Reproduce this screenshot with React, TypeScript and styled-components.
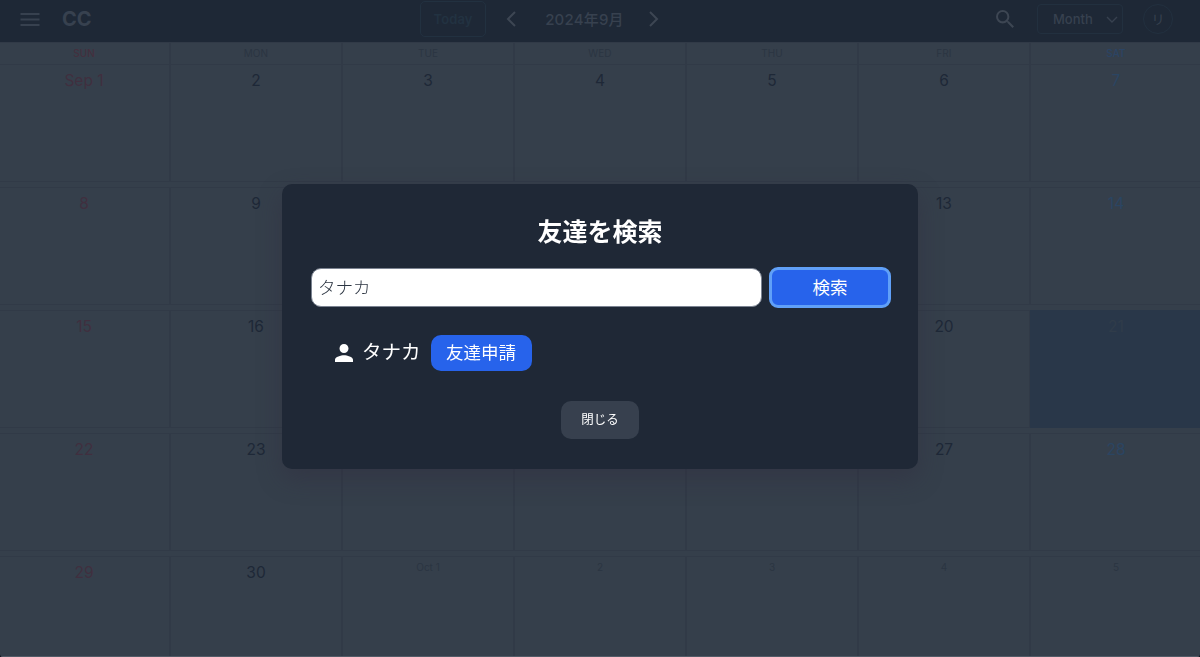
import styled, { createGlobalStyle, css } from "styled-components";

const weekdays = ["SUN", "MON", "TUE", "WED", "THU", "FRI", "SAT"];

const weeks = [
  ["Sep 1", "2", "3", "4", "5", "6", "7"],
  ["8", "9", "10", "11", "12", "13", "14"],
  ["15", "16", "17", "18", "19", "20", "21"],
  ["22", "23", "24", "25", "26", "27", "28"],
  ["29", "30", "Oct 1", "2", "3", "4", "5"]
];

const TODAY = "21";

const dayColor = (index: number) => {
  if (index === 0) return "#402f3f";
  if (index === 6) return "#2b4562";
  return "#1e2837";
};

const Header = () => (
  <HeaderBar>
    <HeaderLeft>
      <MenuIcon viewBox="0 0 20 14">
        <path d="M.5 2h19M.5 7.500h19M.5 13h19" />
      </MenuIcon>
      <Logo>CC</Logo>
    </HeaderLeft>
    <HeaderCenter>
      <TodayButton>Today</TodayButton>
      <Chevron viewBox="0 0 10 16">
        <path d="M9 1L2 8l7 7" />
      </Chevron>
      <MonthTitle>2024年9月</MonthTitle>
      <Chevron viewBox="0 0 10 16">
        <path d="M1 1l7 7-7 7" />
      </Chevron>
    </HeaderCenter>
    <HeaderRight>
      <SearchIcon viewBox="3 3 17.49 17.49">
        <path d="M15.5 14h-.79l-.28-.27A6.471 6.471 0 0 0 16 9.5 6.5 6.5 0 1 0 9.5 16c1.61 0 3.09-.59 4.23-1.57l.27.28v.79l5 4.99L20.49 19l-4.99-5zm-6 0C7.01 14 5 11.99 5 9.5S7.01 5 9.5 5 14 7.01 14 9.5 11.99 14 9.5 14z" />
      </SearchIcon>
      <ViewSelect>
        Month
        <SelectArrow viewBox="0 0 12 7">
          <path d="M1 1l5 5 5-5" />
        </SelectArrow>
      </ViewSelect>
      <Avatar>リ</Avatar>
    </HeaderRight>
  </HeaderBar>
);

const Calendar = () => (
  <CalendarWrapper>
    <WeekdayRow>
      {weekdays.map((day, i) => (
        <Weekday key={day} $index={i}>
          {day}
        </Weekday>
      ))}
    </WeekdayRow>
    <Weeks>
      {weeks.map((week, row) => (
        <Week key={week[0]}>
          {week.map((day, i) => (
            <DayCell
              key={day}
              $index={i}
              $today={day === TODAY}
              $outside={row === 4 && i > 1}
            >
              {day}
            </DayCell>
          ))}
        </Week>
      ))}
    </Weeks>
  </CalendarWrapper>
);

const FriendSearchModal = () => (
  <Overlay>
    <Modal>
      <ModalTitle>友達を検索</ModalTitle>
      <SearchRow>
        <SearchInput defaultValue="タナカ" />
        <SearchButton>検索</SearchButton>
      </SearchRow>
      <ResultRow>
        <PersonIcon viewBox="4 4 16 16">
          <path d="M12 12c2.210 0 4-1.790 4-4s-1.790-4-4-4-4 1.790-4 4 1.790 4 4 4zm0 2c-2.670 0-8 1.340-8 4v2h16v-2c0-2.660-5.330-4-8-4z" />
        </PersonIcon>
        <FriendName>タナカ</FriendName>
        <RequestButton>友達申請</RequestButton>
      </ResultRow>
      <CloseButton>閉じる</CloseButton>
    </Modal>
  </Overlay>
);

const App = () => (
  <>
    <GlobalStyle />
    <Page>
      <Header />
      <Calendar />
      <BottomEdge />
    </Page>
    <FriendSearchModal />
  </>
);

const GlobalStyle = createGlobalStyle`
  * {
    box-sizing: border-box;
  }
  body {
    margin: 0;
    overflow: hidden;
    background: #0b1019;
    font-family: Inter, "Noto Sans CJK JP", sans-serif;
  }
  button, input {
    font-family: inherit;
  }
`;

const Page = styled.div`
  display: flex;
  flex-direction: column;
  height: 657px;
  overflow: hidden;
  border-radius: 0 0 3px 3px;
  background: #353f4b;
`;

const HeaderBar = styled.header`
  display: grid;
  grid-template-columns: 420px 1fr 320px;
  flex: none;
  height: 42px;
  background: #1e2836;
  color: #37414f;
`;

const HeaderLeft = styled.div`
  display: flex;
  align-items: center;
  height: 38px;
  padding-left: 20px;
`;

const HeaderCenter = styled.div`
  display: flex;
  align-items: center;
  height: 38px;
`;

const HeaderRight = styled.div`
  display: flex;
  align-items: center;
  justify-content: flex-end;
  height: 38px;
  padding-right: 27px;
`;

const MenuIcon = styled.svg`
  width: 20px;
  height: 14px;
  margin-right: 22px;
  fill: none;
  stroke: #37414f;
  stroke-width: 2;
`;

const Logo = styled.div`
  font-size: 20px;
  font-weight: 700;
`;

const TodayButton = styled.button`
  width: 66px;
  height: 36px;
  padding: 0;
  border: 1px solid #223140;
  border-radius: 5px;
  background: transparent;
  color: #223241;
  font-size: 13px;
  font-weight: 600;
  letter-spacing: 0.1px;
  margin-right: 20px;
`;

const Chevron = styled.svg`
  width: 10px;
  height: 16px;
  fill: none;
  stroke: #3d4653;
  stroke-width: 2;
`;

const MonthTitle = styled.div`
  width: 133px;
  padding: 0 0 2px 4px;
  text-align: center;
  font-size: 15px;
  font-weight: 500;
  letter-spacing: 0.2px;
  white-space: nowrap;
`;

const SearchIcon = styled.svg`
  width: 18px;
  height: 18px;
  margin-right: 23px;
  fill: #3d4653;
`;

const ViewSelect = styled.div`
  display: flex;
  align-items: center;
  justify-content: space-between;
  width: 86px;
  height: 30px;
  padding: 0 4px 0 15px;
  border: 1px solid #22303f;
  border-radius: 4px;
  font-size: 13px;
  font-weight: 500;
`;

const SelectArrow = styled.svg`
  width: 12px;
  height: 7px;
  fill: none;
  stroke: #37414f;
  stroke-width: 1.4;
`;

const Avatar = styled.div`
  display: flex;
  align-items: center;
  justify-content: center;
  width: 30px;
  height: 30px;
  margin-left: 20px;
  padding-bottom: 2px;
  border: 1px solid #22303f;
  border-radius: 50%;
  font-size: 13px;
`;

const CalendarWrapper = styled.main`
  flex: 1;
  min-height: 0;
  overflow: hidden;
`;

// the outer columns run past the page edges by one gutter
const weekGrid = css`
  display: grid;
  grid-template-columns: repeat(7, 172px);
  margin: 0 -2px;
`;

const WeekdayRow = styled.div`
  ${weekGrid}
  height: 22px;
`;

const Weekday = styled.div<{ $index: number }>`
  border: solid #313a47;
  border-width: 1px 1px 0;
  color: ${({ $index }) =>
    $index === 0 ? "#442f3e" : $index === 6 ? "#2b4464" : "#2b3542"};
  font-size: 10px;
  font-weight: ${({ $index }) => ($index % 6 === 0 ? 500 : 400)};
  line-height: 21px;
  letter-spacing: 0.1px;
  text-align: center;
`;

const Weeks = styled.div`
  display: flex;
  flex-direction: column;
  gap: 5px;
`;

const Week = styled.div`
  ${weekGrid}
  height: 118px;
`;

const DayCell = styled.div<{
  $index: number;
  $today: boolean;
  $outside: boolean;
}>`
  padding-top: 6px;
  border: 1px solid #313a47;
  color: ${({ $index }) => dayColor($index)};
  font-size: 15.500px;
  line-height: 20px;
  text-align: center;
  ${({ $today }) =>
    $today &&
    css`
      border-color: #293749;
      background: #293749;
      color: #303c4a;
    `}
  ${({ $outside }) =>
    $outside &&
    css`
      padding-top: 0;
      color: #2b3542;
      font-size: 10px;
    `}
`;

const BottomEdge = styled.div`
  flex: none;
  height: 1px;
  background: #525b67;
`;

const Overlay = styled.div`
  position: fixed;
  inset: 0;
  display: flex;
  align-items: flex-start;
  justify-content: center;
  padding-top: 184px;
`;

const Modal = styled.div`
  display: flex;
  flex-direction: column;
  align-items: center;
  width: 636px;
  height: 285px;
  padding: 30px 27px 0 29px;
  border-radius: 10px;
  background: #1f2836;
  box-shadow: 0 10px 24px rgba(48, 44, 62, 0.45);
  color: #fff;
`;

const ModalTitle = styled.h2`
  margin: 0 2px 0 0;
  font-size: 25px;
  font-weight: 700;
  line-height: 36px;
`;

const SearchRow = styled.div`
  display: flex;
  align-items: center;
  width: 100%;
  margin-top: 17px;
`;

const SearchInput = styled.input`
  width: 451px;
  height: 39px;
  padding: 0 6px 2px;
  border: 1px solid #7b8391;
  border-radius: 10px;
  outline: none;
  background: #fff;
  color: #2c3542;
  font-size: 17.500px;
  font-weight: 300;
`;

const SearchButton = styled.button`
  flex: 1;
  height: 41px;
  margin-left: 7px;
  padding: 0 0 2px;
  border: 3px solid #60a0f8;
  border-radius: 9px;
  background: #2763eb;
  color: #fff;
  font-size: 17.500px;
`;

const ResultRow = styled.div`
  display: flex;
  align-items: center;
  align-self: flex-start;
  margin-top: 27px;
  padding-left: 24px;
`;

const PersonIcon = styled.svg`
  width: 18px;
  height: 18px;
  fill: #fff;
`;

const FriendName = styled.span`
  margin: -3px 10px 0 9px;
  font-size: 19.500px;
  line-height: 30px;
`;

const RequestButton = styled.button`
  width: 101px;
  height: 36px;
  padding: 0 0 3px;
  border: none;
  border-radius: 10px;
  background: #2763eb;
  color: #fff;
  font-size: 17.500px;
`;

const CloseButton = styled.button`
  width: 78px;
  height: 38px;
  margin: 30px 2px 0 0;
  padding: 0 0 3px;
  border: none;
  border-radius: 10px;
  background: #37404e;
  color: #fff;
  font-size: 12.500px;
`;

export default App;
